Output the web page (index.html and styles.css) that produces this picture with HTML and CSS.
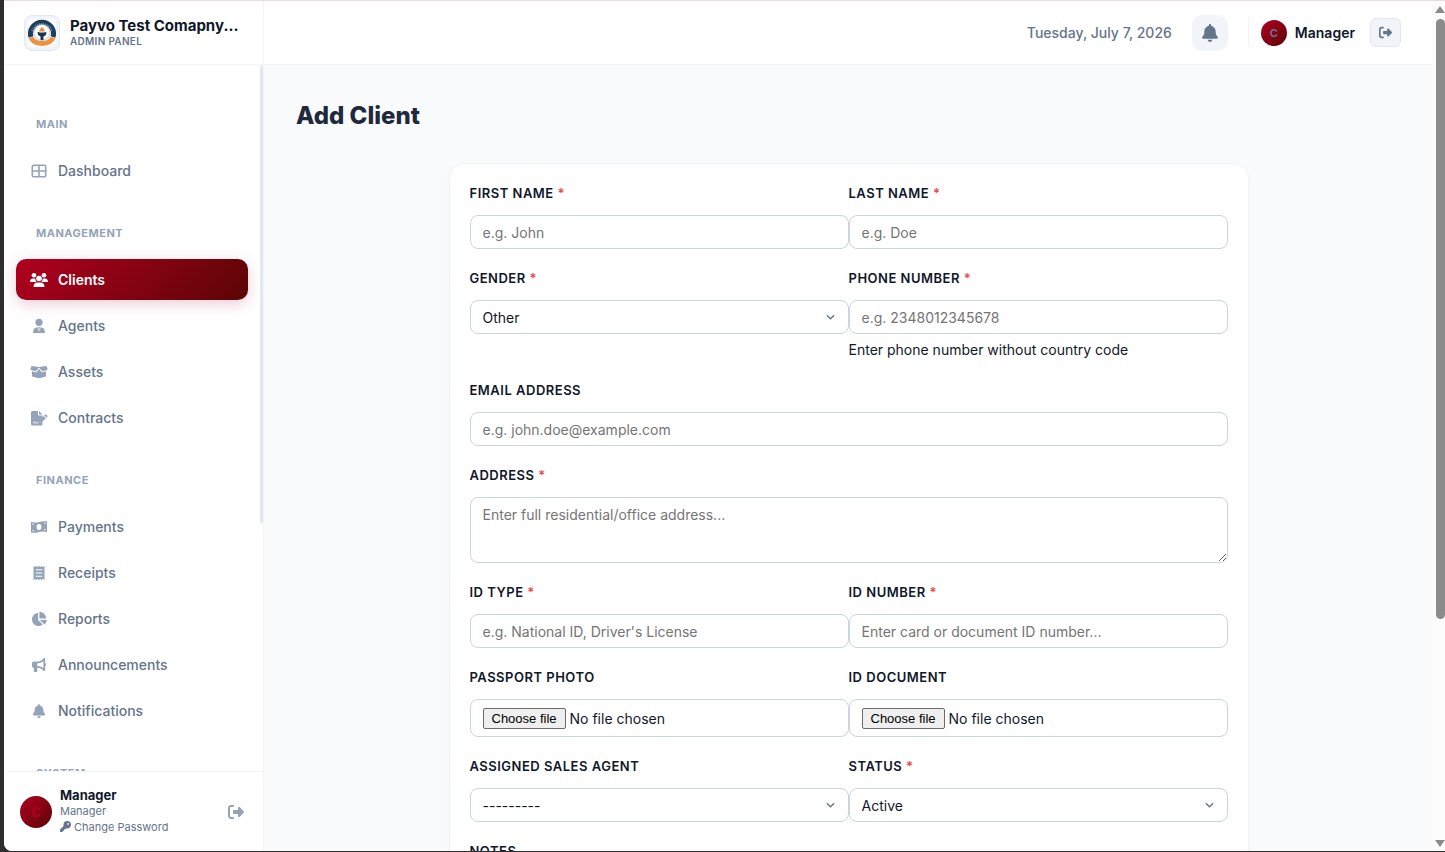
FILE: index.html
```html
<!DOCTYPE html>
<html lang="en">
<head>
  <meta charset="UTF-8">
  <meta name="viewport" content="width=device-width, initial-scale=1.0">
  <title>Add Client</title>
  <link rel="stylesheet" href="styles.css">
</head>
<body>

  <!-- shared icons -->
  <svg class="sprite" aria-hidden="true">
    <symbol id="bell" viewBox="0 0 448 512"><path d="M224 0c-17.7 0-32 14.3-32 32V51.2C119 66 64 130.6 64 208v18.8c0 47-17.3 92.4-48.5 127.6l-7.4 8.3c-8.4 9.4-10.4 22.9-5.3 34.4S19.4 416 32 416H416c12.6 0 24-7.4 29.2-18.9s3.1-25-5.3-34.4l-7.4-8.3C401.3 319.2 384 273.9 384 226.8V208c0-77.4-55-142-128-156.8V32c0-17.7-14.3-32-32-32zm45.3 493.3c12-12 18.7-28.3 18.7-45.3H160c0 17 6.7 33.3 18.7 45.3s28.3 18.7 45.3 18.7s33.3-6.7 45.3-18.7z"/></symbol>
    <symbol id="logout" viewBox="0 0 512 512"><path d="M377.9 105.9L500.7 228.7c7.2 7.2 11.3 17.1 11.3 27.3s-4.1 20.1-11.3 27.3L377.9 406.1c-6.4 6.4-15 9.9-24 9.9c-18.7 0-33.9-15.2-33.9-33.9l0-62.1-128 0c-17.7 0-32-14.3-32-32l0-64c0-17.7 14.3-32 32-32l128 0 0-62.1c0-18.7 15.2-33.9 33.9-33.9c9 0 17.6 3.6 24 9.9zM160 96L96 96c-17.7 0-32 14.3-32 32l0 256c0 17.7 14.3 32 32 32l64 0c17.7 0 32 14.3 32 32s-14.3 32-32 32l-64 0c-53 0-96-43-96-96L0 128C0 75 43 32 96 32l64 0c17.7 0 32 14.3 32 32s-14.3 32-32 32z"/></symbol>
  </svg>

  <div class="app">

    <aside class="sidebar">
      <div class="brand">
        <div class="brand-logo">
          <svg width="28" height="28" viewBox="0 0 28 28">
            <rect width="28" height="28" rx="4" fill="#fff"/>
            <path d="M3 18A11.500 11.500 0 1 1 25 18" fill="none" stroke="#1d3f5c" stroke-width="5"/>
            <path d="M3 18.500Q5 24 14 24.500Q23 24 25 18.500" fill="none" stroke="#ee9240" stroke-width="5"/>
            <path d="M4 12A10.500 10.500 0 0 1 24 12" fill="none" stroke="#8299ab" stroke-width="1.500" stroke-dasharray="1 1"/>
            <circle cx="14" cy="13.500" r="8" fill="#fff" stroke="#8da0b0" stroke-width="0.600"/>
            <path d="M9.500 13l3 .5h3l3-.5-.5 3-2.500 1.500V21h-3v-3.500L10 16z" fill="#173753"/>
            <path d="M11 12.500l1-2.500 2-2 2 2 1 2.500z" fill="#ee8b3c"/>
          </svg>
        </div>
        <div class="brand-text">
          <div class="brand-name">Payvo Test Comapny...</div>
          <div class="brand-sub">Admin Panel</div>
        </div>
      </div>

      <nav class="nav">
        <div class="nav-label">Main</div>
        <a href="#" class="nav-item">
          <svg class="icon" viewBox="0 0 18 18"><path fill="none" stroke="currentColor" stroke-width="1.600" d="M3.500 3.200h11q1.200 0 1.200 1.200v9.200q0 1.200-1.200 1.200h-11q-1.200 0-1.200-1.200V4.400q0-1.200 1.200-1.200zM3 9h12M9 4v10"/></svg>
          Dashboard
        </a>

        <div class="nav-label">Management</div>
        <a href="#" class="nav-item active">
          <svg class="icon" viewBox="0 0 18 18"><circle cx="4" cy="4.200" r="2.300"/><circle cx="14" cy="4.200" r="2.300"/><circle cx="9" cy="7.500" r="2.800"/><path d="M0 11q0-3.500 3-3.500h2.200q.1 2 1.600 3.500zM18 11q0-3.500-3-3.500h-2.200q-.1 2-1.600 3.500zM3.500 16q0-4.500 4-4.500h3q4 0 4 4.500z"/></svg>
          Clients
        </a>
        <a href="#" class="nav-item">
          <svg class="icon" viewBox="0 0 18 18"><circle cx="9" cy="5.300" r="3.600"/><path d="M3 16q0-5.500 4.500-5.800L8.300 15l.3-3.200-.8-1.600h2.400l-.8 1.600.3 3.200.8-4.800Q15 10.500 15 16z"/></svg>
          Agents
        </a>
        <a href="#" class="nav-item">
          <svg class="icon" viewBox="0 0 18 18"><path d="M1.500 3L9 4l7.500-1 1 3q.2.800-.6 1l-4.400 1.200q-.5.100-.8-.4L9 4.500 6.300 7.800q-.3.500-.8.400L1.100 7Q.3 6.800.5 6z"/><path d="M2 8.200l3.800 1q.8.200 1.300-.6L9 5.800l1.900 2.800q.5.800 1.300.6l3.800-1v4.600q0 .8-.8 1L9 15.300 2.800 13.800q-.8-.2-.8-1z"/></svg>
          Assets
        </a>
        <a href="#" class="nav-item">
          <svg class="icon" viewBox="0 0 18 18"><path d="M2.500 2H8v3.500q0 1 1 1h3.500v2L9 12l-.8 2 3.300-.6 1-.9v2.500q0 1.500-1.500 1.500H2.500Q1 16.500 1 15V3.500Q1 2 2.500 2z"/><path d="M9 2l3.500 3.500H9zM16 5.400l1.400 1.400q.3.400 0 .8l-1 1-2.200-2.200 1-1q.4-.3.800 0zM13.600 7l2.200 2.200-4.400 4.200-2.800.6.600-2.800z"/><path fill="none" stroke="#fff" stroke-width=".8" d="M3 14.500q1 0 1.500-2 .5 1.500 1.500 1.500h2"/></svg>
          Contracts
        </a>

        <div class="nav-label">Finance</div>
        <a href="#" class="nav-item">
          <svg class="icon" viewBox="0 0 18 18"><path fill-rule="evenodd" d="M1 3.800q4 1.400 8 .2t8-.7v10.900q-4-1.400-8-.2t-8 .7zM9 6a2.400 3 0 1 0 0 6 2.400 3 0 1 0 0-6zM2.500 5.500v1.500Q3.800 7 4 5.700zM2.500 11.700v1.500H4q0-1.400-1.500-1.500zM15.500 4.800H14q0 1.400 1.500 1.500zM15.500 10.800q-1.400.2-1.500 1.500h1.500z"/></svg>
          Payments
        </a>
        <a href="#" class="nav-item">
          <svg class="icon" viewBox="0 0 18 18"><path fill-rule="evenodd" d="M3.500 2l1.400 1 1.400-1 1.300 1L9 2l1.400 1 1.300-1 1.400 1 1.400-1v14l-1.400-1-1.400 1-1.300-1L9 16l-1.400-1-1.300 1-1.400-1-1.400 1zM5.700 5.300v1h6.600v-1zM5.700 8.500v1h6.600v-1zM5.700 11.700v1h6.600v-1z"/></svg>
          Receipts
        </a>
        <a href="#" class="nav-item">
          <svg class="icon icon-sm" viewBox="0 0 576 512"><path d="M304 240V16.600c0-9 7-16.600 16-16.600C443.700 0 544 100.300 544 224c0 9-7.600 16-16.600 16H304zM32 272C32 150.700 122.100 50.300 239 34.300c9.200-1.300 17 6.100 17 15.400V288L412.500 444.500c6.700 6.700 6.200 17.700-1.500 23.100C371.800 495.600 323.800 512 272 512C139.500 512 32 404.600 32 272zm526.400 16c9.300 0 16.600 7.800 15.400 17c-7.700 55.900-34.600 105.600-73.900 142.300c-6 5.600-15.400 5.200-21.200-.7L320 288H558.400z"/></svg>
          Reports
        </a>
        <a href="#" class="nav-item">
          <svg class="icon icon-sm" viewBox="0 0 512 512"><path d="M480 32c0-12.900-7.800-24.600-19.800-29.600s-25.700-2.200-34.900 6.900L381.700 53c-48 48-113.100 75-181 75H64c-35.300 0-64 28.700-64 64v96c0 35.300 28.700 64 64 64v128c0 17.700 14.300 32 32 32h64c17.700 0 32-14.300 32-32V352h8.700c67.900 0 133 27 181 75l43.600 43.600c9.200 9.200 22.900 11.900 34.900 6.900s19.800-16.600 19.800-29.600V300.400c18.600-8.800 32-32.500 32-60.400s-13.400-51.600-32-60.400V32zm-64 76.700V371.300C357.200 317.800 280.500 288 200.700 288H192V192h8.700c79.800 0 156.500-29.800 215.300-83.300z"/></svg>
          Announcements
        </a>
        <a href="#" class="nav-item">
          <svg class="icon icon-sm"><use href="#bell"/></svg>
          Notifications
        </a>

        <div class="nav-label">System</div>
      </nav>
      <div class="nav-thumb"></div>

      <div class="sidebar-footer">
        <div class="avatar avatar-lg">C</div>
        <div class="user-info">
          <div class="user-name">Manager</div>
          <div class="user-role">Manager</div>
          <a href="#" class="change-password">
            <svg width="11" height="11" viewBox="0 0 512 512"><path fill="currentColor" fill-rule="evenodd" d="M336 352c97 0 176-79 176-176S433 0 336 0 160 79 160 176c0 19 3 37 8 54L7 391c-5 5-7 11-7 17v80c0 13 11 24 24 24h80c13 0 24-11 24-24v-40h40c13 0 24-11 24-24v-40h40c6 0 13-3 17-7l33-33c17 5 35 8 54 8zM376 96a40 40 0 1 1 0 80 40 40 0 1 1 0-80z"/></svg>
            Change Password
          </a>
        </div>
        <button type="button" class="footer-logout" aria-label="Log out">
          <svg width="16" height="16"><use href="#logout"/></svg>
        </button>
      </div>
    </aside>

    <div class="page">
      <header class="topbar">
        <span class="date">Tuesday, July 7, 2026</span>
        <button type="button" class="bell-button" aria-label="Notifications">
          <svg width="18" height="18"><use href="#bell"/></svg>
        </button>
        <div class="topbar-user">
          <div class="avatar">C</div>
          <span class="topbar-name">Manager</span>
          <button type="button" class="logout-button" aria-label="Log out">
            <svg width="13" height="13"><use href="#logout"/></svg>
          </button>
        </div>
      </header>

      <main class="content">
        <h1>Add Client</h1>

        <form class="card">
          <div class="field">
            <label for="firstName">First Name <span class="required">*</span></label>
            <input type="text" id="firstName" placeholder="e.g. John">
          </div>
          <div class="field">
            <label for="lastName">Last Name <span class="required">*</span></label>
            <input type="text" id="lastName" placeholder="e.g. Doe">
          </div>

          <div class="field">
            <label for="gender">Gender <span class="required">*</span></label>
            <div class="select-wrap">
              <select id="gender">
                <option>Male</option>
                <option>Female</option>
                <option selected>Other</option>
              </select>
              <svg class="chevron" viewBox="0 0 10 6"><path d="M1 1l4 4 4-4"/></svg>
            </div>
          </div>
          <div class="field">
            <label for="phone">Phone Number <span class="required">*</span></label>
            <input type="tel" id="phone" placeholder="e.g. 2348012345678">
            <div class="help">Enter phone number without country code</div>
          </div>

          <div class="field full">
            <label for="email">Email Address</label>
            <input type="email" id="email" placeholder="e.g. john.doe@example.com">
          </div>

          <div class="field full">
            <label for="address">Address <span class="required">*</span></label>
            <textarea id="address" placeholder="Enter full residential/office address..."></textarea>
          </div>

          <div class="field">
            <label for="idType">ID Type <span class="required">*</span></label>
            <input type="text" id="idType" placeholder="e.g. National ID, Driver's License">
          </div>
          <div class="field">
            <label for="idNumber">ID Number <span class="required">*</span></label>
            <input type="text" id="idNumber" placeholder="Enter card or document ID number...">
          </div>

          <div class="field">
            <label for="passport">Passport Photo</label>
            <div class="file-box">
              <span class="file-button">Choose file</span>
              <span>No file chosen</span>
              <input type="file" id="passport">
            </div>
          </div>
          <div class="field">
            <label for="idDocument">ID Document</label>
            <div class="file-box">
              <span class="file-button">Choose file</span>
              <span>No file chosen</span>
              <input type="file" id="idDocument">
            </div>
          </div>

          <div class="field">
            <label for="agent">Assigned Sales Agent</label>
            <div class="select-wrap">
              <select id="agent">
                <option>---------</option>
              </select>
              <svg class="chevron" viewBox="0 0 10 6"><path d="M1 1l4 4 4-4"/></svg>
            </div>
          </div>
          <div class="field">
            <label for="status">Status <span class="required">*</span></label>
            <div class="select-wrap">
              <select id="status">
                <option>Active</option>
                <option>Inactive</option>
              </select>
              <svg class="chevron" viewBox="0 0 10 6"><path d="M1 1l4 4 4-4"/></svg>
            </div>
          </div>

          <div class="field full">
            <label for="notes">Notes</label>
            <textarea id="notes"></textarea>
          </div>
        </form>
      </main>
    </div>

    <div class="scrollbar">
      <div class="arrow-up"></div>
      <div class="thumb"></div>
      <div class="arrow-down"></div>
    </div>

  </div>

</body>
</html>
```
FILE: styles.css
```css
* {
  box-sizing: border-box;
}

body {
  margin: 0;
  height: 100vh;
  padding: 0 0 1px 4px;
  background: #302e2d;
  color: #0f172a;
  font-family: Inter, "Liberation Sans", sans-serif;
  font-size: 14px;
}

button, input, select, textarea {
  font-family: inherit;
}

button {
  padding: 0;
  cursor: pointer;
}

a {
  text-decoration: none;
}

svg {
  fill: currentColor;
}

.sprite {
  display: none;
}

.app {
  display: grid;
  grid-template-columns: 260px 1fr 12px;
  height: 100%;
  border-top: 1px solid #e8dddb;
  border-bottom-left-radius: 8px;
  background: #f8fafc;
  overflow: hidden;
}

/* Sidebar */
.sidebar {
  position: relative;
  display: flex;
  flex-direction: column;
  min-height: 0;
  background: #fff;
  border-right: 1px solid #f1f5f9;
}

.brand {
  display: flex;
  align-items: center;
  flex-shrink: 0;
  gap: 10px;
  height: 64px;
  padding: 0 16px 0 20px;
  border-bottom: 1px solid #f1f5f9;
}

.brand-logo {
  display: grid;
  place-items: center;
  flex-shrink: 0;
  width: 36px;
  height: 36px;
  border: 1px solid #e2e8f0;
  border-radius: 8px;
  background: #f1f5f9;
}

.brand-text {
  min-width: 0;
  padding-bottom: 2px;
}

.brand-name {
  font-size: 15px;
  font-weight: 700;
  line-height: 18px;
  white-space: nowrap;
}

.brand-sub {
  font-size: 10px;
  font-weight: 600;
  line-height: 12px;
  letter-spacing: 0.3px;
  text-transform: uppercase;
  color: #64748b;
}

.nav {
  flex: 1;
  min-height: 0;
  padding: 17px 15px 18px 12px;
  overflow-y: auto;
  scrollbar-width: none;
}

.nav-thumb {
  position: absolute;
  top: 64px;
  right: 0;
  width: 3px;
  height: 458px;
  border-radius: 2px;
  background: #e2e8f0;
}

.nav-label {
  margin: 34px 0 18px;
  padding-left: 20px;
  font-size: 11px;
  font-weight: 700;
  line-height: 16px;
  letter-spacing: 0.5px;
  text-transform: uppercase;
  color: #94a3b8;
}

.nav-item {
  display: flex;
  align-items: center;
  gap: 10px;
  height: 41px;
  margin-bottom: 5px;
  padding: 0 14px;
  border-radius: 10px;
  font-size: 14px;
  font-weight: 500;
  color: #64748b;
}

.nav-item:has(+ .nav-label) {
  margin-bottom: 0;
}

.nav-item:hover {
  background: #f8fafc;
}

.nav-item.active {
  background: linear-gradient(135deg, #b00020, #5c0505);
  box-shadow: 0 4px 15px rgba(150, 0, 50, 0.2);
  color: #fff;
  font-weight: 600;
}

.icon {
  width: 18px;
  height: 18px;
  color: #94a3b8;
}

.icon-sm {
  height: 14px;
}

.active .icon {
  color: #fff;
}

.sidebar-footer {
  display: flex;
  align-items: center;
  flex-shrink: 0;
  gap: 8px;
  height: 80px;
  padding: 0 19px 0 16px;
  border-top: 1px solid #f1f5f9;
}

.avatar {
  display: grid;
  place-items: center;
  flex-shrink: 0;
  width: 26px;
  height: 26px;
  border-radius: 50%;
  background: linear-gradient(135deg, #b00020, #5c0505);
  font-size: 11px;
  font-weight: 700;
  color: #64748b;
}

.avatar-lg {
  width: 32px;
  height: 32px;
  font-size: 13px;
  color: #b00020;
}

.user-info {
  flex: 1;
  padding-bottom: 2px;
}

.user-name {
  font-size: 13px;
  font-weight: 700;
  line-height: 16px;
}

.user-role, .change-password {
  font-size: 11px;
  line-height: 16px;
  color: #64748b;
}

.change-password {
  display: flex;
  align-items: center;
  gap: 3px;
}

.footer-logout {
  display: flex;
  border: none;
  background: none;
  color: #94a3b8;
}

/* Top bar */
.page {
  display: flex;
  flex-direction: column;
  min-width: 0;
  min-height: 0;
}

.topbar {
  display: flex;
  align-items: center;
  justify-content: flex-end;
  flex-shrink: 0;
  gap: 20px;
  height: 64px;
  padding: 0 32px;
  border-bottom: 1px solid #f1f5f9;
  background: #fff;
}

.date {
  font-size: 14px;
  font-weight: 500;
  color: #64748b;
}

.bell-button {
  display: grid;
  place-items: center;
  width: 36px;
  height: 36px;
  border: none;
  border-radius: 10px;
  background: #f1f5f9;
  color: #64748b;
}

.topbar-user {
  display: flex;
  align-items: center;
  gap: 8px;
  padding-left: 12px;
  border-left: 1px solid #f1f5f9;
}

.topbar-name {
  font-size: 14px;
  font-weight: 600;
}

.logout-button {
  display: grid;
  place-items: center;
  width: 31px;
  height: 29px;
  margin-left: 7px;
  border: 1px solid #e2e8f0;
  border-radius: 6px;
  background: #f1f5f9;
  color: #64748b;
}

/* Form */
.content {
  flex: 1;
  min-height: 0;
  padding: 32px;
  overflow-y: auto;
  scrollbar-width: none;
}

h1 {
  margin: 0 0 28px;
  font-size: 24px;
  font-weight: 800;
  line-height: 38px;
  color: #1e293b;
}

.card {
  display: grid;
  grid-template-columns: 1fr 1fr;
  row-gap: 20px;
  max-width: 800px;
  margin: 0 auto;
  padding: 20px;
  border: 1px solid #f1f5f9;
  border-radius: 16px;
  background: #fff;
  box-shadow: 0 1px 3px rgba(15, 23, 42, 0.04);
}

.full {
  grid-column: 1 / -1;
}

.field label {
  display: block;
  margin-bottom: 13px;
  font-size: 13px;
  font-weight: 600;
  line-height: 18px;
  letter-spacing: 0.5px;
  text-transform: uppercase;
}

.required {
  color: #ef4444;
}

.field > input, select, textarea, .file-box {
  display: block;
  width: 100%;
  height: 34px;
  padding: 0 12px;
  border: 1px solid #cbd5e1;
  border-radius: 8px;
  background: #fff;
  color: #0f172a;
  font-size: 14px;
}

textarea {
  height: 66px;
  padding: 8px 12px;
  resize: vertical;
}

input::placeholder, textarea::placeholder {
  color: #757575;
}

select {
  appearance: none;
}

.select-wrap {
  position: relative;
}

.chevron {
  position: absolute;
  top: 14px;
  right: 14px;
  width: 9px;
  height: 6px;
  fill: none;
  stroke: #64748b;
  stroke-width: 1.5;
  pointer-events: none;
}

.file-box {
  position: relative;
  display: flex;
  align-items: center;
  gap: 4px;
  height: 38px;
}

.file-button {
  padding: 2px 8px;
  border: 1px solid #6b6b6b;
  border-radius: 2px;
  background: #efefef;
  color: #000;
  font-family: "Liberation Sans", Arial, sans-serif;
  font-size: 13px;
  line-height: 15px;
}

.file-box input {
  position: absolute;
  inset: 0;
  width: 100%;
  opacity: 0;
  cursor: pointer;
}

.help {
  margin-top: 5px;
  font-size: 14px;
  line-height: 22px;
}

/* Window scrollbar */
.scrollbar {
  display: flex;
  flex-direction: column;
  align-items: flex-end;
  padding: 5px 0 4px;
  background: #fcfcfc;
}

.thumb {
  width: 9px;
  height: 600px;
  margin-top: 6px;
  border-radius: 5px;
  background: #8b8b8b;
}

.arrow-up, .arrow-down {
  border: 5px solid transparent;
  border-top-width: 0;
  border-bottom: 7px solid #8b8b8b;
}

.arrow-down {
  margin-top: auto;
  border-top: 7px solid #8b8b8b;
  border-bottom-width: 0;
}
```
